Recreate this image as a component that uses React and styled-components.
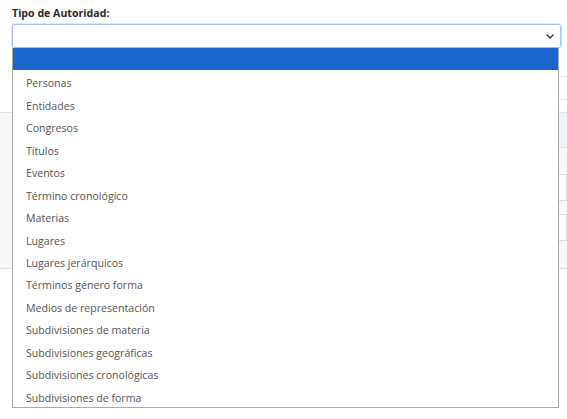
import styled, { createGlobalStyle } from "styled-components";
import { useState } from "react";

const options = [
    "",
    "Personas",
    "Entidades",
    "Congresos",
    "Títulos",
    "Eventos",
    "Término cronológico",
    "Materias",
    "Lugares",
    "Lugares jerárquicos",
    "Términos género forma",
    "Medios de representación",
    "Subdivisiones de materia",
    "Subdivisiones geográficas",
    "Subdivisiones cronológicas",
    "Subdivisiones de forma",
];

function App() {
    const [active, setActive] = useState(0);

    return (
        <Page>
            <GlobalStyle />
            <Label>Tipo de Autoridad:</Label>
            <SelectWrap>
                <SelectBox>
                    <Chevron width="8" height="5" viewBox="0 0 8 5">
                        <path d="M1 1l3 3 3-3" fill="none" stroke="#333" strokeWidth="1.4" strokeLinecap="round" strokeLinejoin="round" />
                    </Chevron>
                </SelectBox>
                <Menu>
                    {options.map((opt, i) => (
                        <Option key={i} $active={i === active} onMouseEnter={() => setActive(i)}>
                            {opt}
                        </Option>
                    ))}
                </Menu>
            </SelectWrap>

            <GhostRow $top={28} />
            <GhostRow $top={22} />
            <Panel>
                <PanelHeader />
                <GhostInput $top={26} />
                <GhostInput $top={13} />
            </Panel>
        </Page>
    );
}

const GlobalStyle = createGlobalStyle`
    body {
        margin: 0;
        background: #fff;
        font-family: "Open Sans", "Liberation Sans", sans-serif;
    }
`

const Page = styled.div`
    width: 567px;
    height: 419px;
    overflow: hidden;
    padding-top: 6px;
    box-sizing: border-box;
`

const Label = styled.div`
    margin-left: 12px;
    font-size: 10.6px;
    font-weight: 700;
    color: #2b2b2b;
    line-height: 15px;
`

const SelectWrap = styled.div`
    position: relative;
    margin: 3px 0 0 12px;
    width: 549px;
`

const SelectBox = styled.div`
    height: 24px;
    box-sizing: border-box;
    border: 1px solid #9cc3f0;
    border-radius: 3px;
    box-shadow: 0 0 0 1px rgba(120, 170, 235, 0.25);
    background: #fff;
    display: flex;
    align-items: center;
    justify-content: flex-end;
    padding-right: 6px;
`

const Chevron = styled.svg`
    display: block;
`

const Menu = styled.ul`
    position: absolute;
    top: 100%;
    left: 0;
    width: 547px;
    margin: 0;
    padding: 0;
    list-style: none;
    background: #fff;
    border: 1px solid #a9a9a9;
    border-top: none;
    box-sizing: border-box;
    z-index: 2;
`

const Option = styled.li`
    height: 22.45px;
    box-sizing: border-box;
    padding: 5px 0 0 13px;
    line-height: 17.45px;
    font-size: 10.6px;
    color: ${p => (p.$active ? "#fff" : "#555")};
    background: ${p => (p.$active ? "#1a66cf" : "transparent")};
    white-space: nowrap;
    cursor: default;
`

const GhostRow = styled.div`
    margin: ${p => p.$top}px 0 0 12px;
    border-top: 1px solid #e6e6e6;
`

const Panel = styled.div`
    margin-top: 12px;
    height: 155px;
    background: #f8f8f8;
    border-top: 1px solid #e2e2e2;
    border-bottom: 1px solid #e2e2e2;
    display: flex;
    flex-direction: column;
    padding-left: 12px;
`

const PanelHeader = styled.div`
    height: 34px;
    background: #eef1f5;
    border-bottom: 1px solid #e2e5ea;
`

const GhostInput = styled.div`
    margin-top: ${p => p.$top}px;
    height: 27px;
    background: #fff;
    border: 1px solid #dcdcdc;
    box-sizing: border-box;
`

export default App;
